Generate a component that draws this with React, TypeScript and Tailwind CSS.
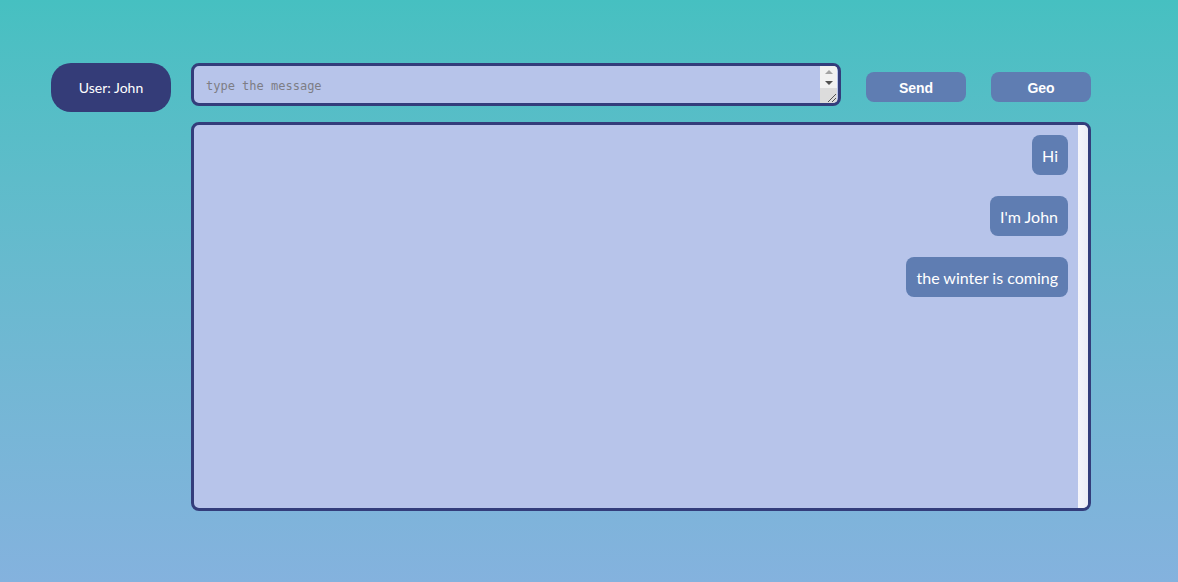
const messages = ["Hi", "I'm John", "the winter is coming"];

function TextareaScrollbar() {
    return (
        <div className="absolute right-[1px] top-0 bottom-0 w-[17px] bg-[#dcdcdc] flex flex-col items-center">
            <div className="w-full h-[12px] bg-[#f1f1f1] flex items-center justify-center">
                <div className="w-0 h-0 border-l-[4px] border-r-[4px] border-b-[4px] border-l-transparent border-r-transparent border-b-[#a3a3a3]" />
            </div>
            <div className="w-full h-[10px] bg-[#f1f1f1] flex items-center justify-center">
                <div className="w-0 h-0 border-l-[4px] border-r-[4px] border-t-[4px] border-l-transparent border-r-transparent border-t-[#505050]" />
            </div>
            <svg className="absolute bottom-0 right-0" width="12" height="12" viewBox="0 0 12 12">
                <path d="M11 3 L3 11 M11 7 L7 11" stroke="#555" strokeWidth="1" />
            </svg>
        </div>
    );
}

export default function App() {
    return (
        <div className="min-h-[582px] w-full bg-gradient-to-b from-[#46c0c1] to-[#84b2de] font-['Lato',sans-serif]">
            <div className="flex gap-[20px] pt-[63px] pl-[51px]">
                {/* User badge */}
                <div className="w-[120px] h-[49px] rounded-[20px] bg-[#343c78] text-white text-[14px] flex items-center justify-center">
                    User: John
                </div>

                <div className="flex flex-col">
                    <div className="flex items-start">
                        <div className="relative w-[650px] h-[43px] rounded-[8px] border-[3px] border-[#333d7b] bg-[#b7c4ea] overflow-hidden">
                            <div className="pl-[12px] pt-[14px] font-['DejaVu_Sans_Mono',monospace] text-[12px] text-[#7d7d85] leading-none">
                                type the message
                            </div>
                            <TextareaScrollbar />
                        </div>
                        <button className="ml-[25px] mt-[9px] w-[100px] h-[30px] pt-[2px] rounded-[8px] bg-[#5f7db2] text-white font-bold text-[14px] font-['Liberation_Sans',Arial,sans-serif]">
                            Send
                        </button>
                        <button className="ml-[25px] mt-[9px] w-[100px] h-[30px] pt-[2px] rounded-[8px] bg-[#5f7db2] text-white font-bold text-[14px] font-['Liberation_Sans',Arial,sans-serif]">
                            Geo
                        </button>
                    </div>

                    {/* Chat window */}
                    <div className="mt-[16px] w-[900px] h-[389px] rounded-[8px] border-[3px] border-[#333d7b] bg-[#b7c4ea] flex overflow-hidden">
                        <div className="flex-1 flex flex-col items-end gap-[21px] pt-[10px] pr-[10px]">
                            {messages.map((m, i) => (
                                <div key={i} className="h-[40px] px-[10px] pt-[2px] rounded-[8px] bg-[#5f7db2] text-white text-[16px] flex items-center">
                                    {m}
                                </div>
                            ))}
                        </div>
                        <div className="w-[10px] bg-gradient-to-r from-[#f5f5fb] to-[#ececf6]" />
                    </div>
                </div>
            </div>
        </div>
    );
}
